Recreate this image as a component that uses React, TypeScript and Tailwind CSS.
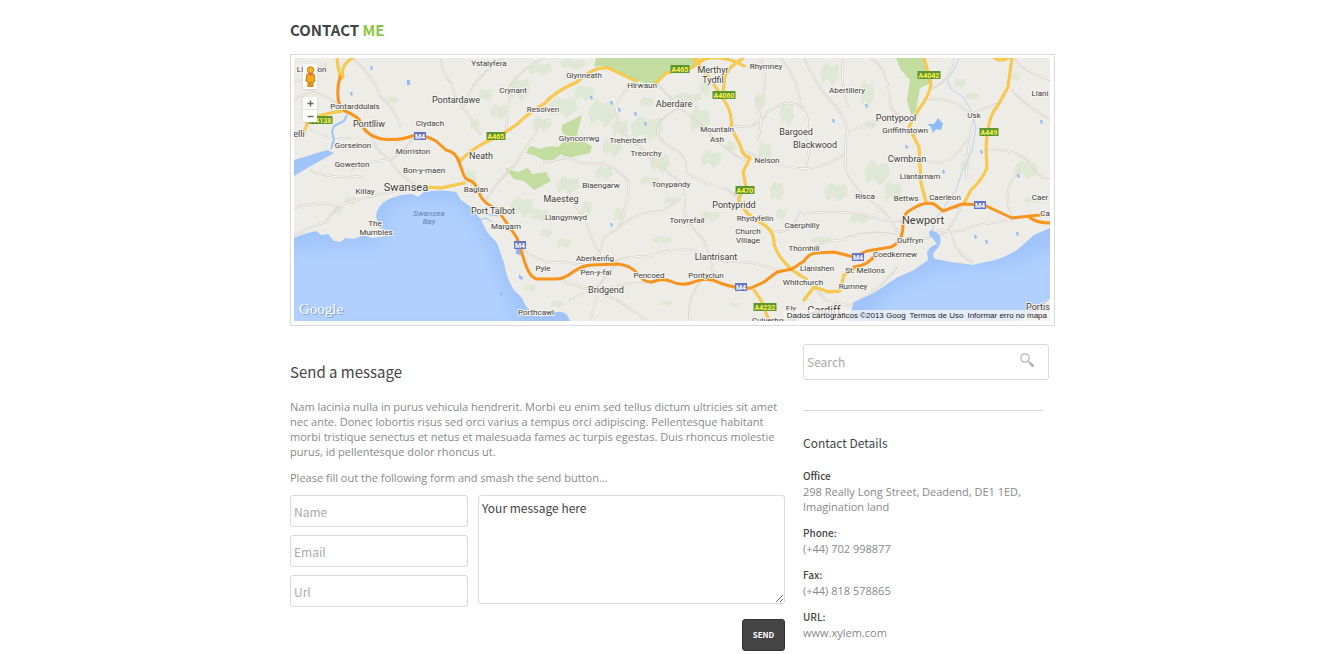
import { useState } from 'react'

type Label = [text: string, x: number, y: number]

const TOWNS: Label[] = [
  ['Ystalyfera', 489, 66], ['Glynneath', 584, 78], ['Crynant', 513, 93], ['Hirwaun', 642, 88],
  ['Resolven', 543, 112], ['Pontarddulais', 355, 109], ['Clydach', 430, 126],
  ['Gorseinon', 353, 148], ['Morriston', 413, 154], ['Gowerton', 352, 167], ['Bon-y-maen', 424, 173],
  ['Killay', 365, 194], ['Baglan', 476, 192], ['Margam', 506, 229], ['The', 375, 226],
  ['Mumbles', 376, 235], ['Llangynwyd', 566, 220], ['Blaengarw', 601, 188], ['Glyncorrwg', 579, 141],
  ['Treherbert', 628, 143], ['Treorchy', 646, 156], ['Rhymney', 766, 69], ['Mountain', 717, 132],
  ['Ash', 717, 142], ['Nelson', 767, 163], ['Abertillery', 847, 93], ['Griffithstown', 905, 133],
  ['Usk', 974, 118], ['Llantarnam', 920, 179], ['Risca', 865, 199], ['Bettws', 906, 201],
  ['Caerleon', 945, 200], ['Duffryn', 910, 243], ['Coedkernew', 895, 257], ['Thornhill', 804, 251],
  ['Llanishen', 817, 271], ['St. Mellons', 865, 273], ['Rumney', 853, 289], ['Whitchurch', 803, 285],
  ['Ely', 791, 311], ['Pontyclun', 706, 278], ['Church', 748, 234], ['Village', 748, 243],
  ['Rhydyfelin', 755, 221], ['Caerphilly', 802, 228], ['Tonypandy', 671, 187], ['Tonyrefail', 687, 223],
  ['Pencoed', 649, 278], ['Pen-y-fai', 596, 275], ['Aberkenfig', 595, 261], ['Pyle', 543, 271],
  ['Porthcawl', 536, 315], ['Llani', 1040, 96], ['Caer', 1040, 200], ['Ca', 1045, 216],
  ['Ll', 300, 72], ['ion', 321, 72], ['Culverhouse', 774, 323],
]

const BIG_TOWNS: Label[] = [
  ['Pontardawe', 456, 103], ['Pontlliw', 369, 127], ['elli', 299, 137], ['Maesteg', 561, 202],
  ['Aberdare', 674, 107], ['Merthyr', 713, 73], ['Tydfil', 713, 83], ['Bargoed', 796, 135],
  ['Blackwood', 815, 148], ['Pontypool', 896, 121], ['Cwmbran', 907, 162], ['Pontypridd', 734, 208],
  ['Llantrisant', 716, 260], ['Bridgend', 606, 293], ['Neath', 481, 159], ['Port Talbot', 493, 214],
  ['Portis', 1038, 310],
]

const CITIES: Label[] = [['Swansea', 406, 191], ['Newport', 923, 224], ['Cardiff', 824, 314]]

const SHIELDS: Label[] = [
  ['A4138', 321, 120], ['A465', 496, 136], ['A465', 680, 69], ['A4060', 724, 95], ['A470', 745, 190],
  ['A4042', 929, 75], ['A449', 989, 132], ['A4232', 765, 307],
]

const MOTORWAY_SHIELDS: Label[] = [
  ['M4', 420, 136], ['M4', 520, 245], ['M4', 741, 287], ['M4', 858, 257], ['M4', 980, 205],
]

const MOTORWAYS = [
  'M340 77 Q337 88 338 97 Q338 105 345 111 Q358 116 362 124 Q365 135 382 139 Q400 141 412 136 Q422 133 436 141 L446 150 Q456 152 459 162 L463 173 Q464 179 471 181 Q476 183 480 195 Q484 204 497 209 L506 222 L517 238 Q521 250 525 263 Q530 278 537 279 L556 279 Q564 279 573 272 Q583 265 592 265 L617 264 Q630 265 637 273 Q644 283 652 282 Q662 278 670 281 Q682 287 694 282 Q707 276 720 283 Q737 289 751 288 L764 282 L777 272 L792 269 L804 261 Q810 253 816 253 L834 252 L854 257 L867 251 L891 247 Q903 242 903 225 Q902 214 912 209 Q924 201 934 204 L943 211 L962 204 L984 205 L1012 218 L1050 214',
  'M1029 217 Q1036 223 1050 223',
  'M876 252 Q871 265 854 267',
]

const A_ROADS = [
  'M337 58 Q338 70 341 79 M352 58 Q340 66 343 77',
  'M303 134 L309 120 Q320 114 342 111',
  'M459 162 Q468 152 484 143 Q510 132 524 118 Q536 108 544 104 Q554 92 577 82 Q594 66 608 68 L636 81 M656 83 L666 73 L691 68 L706 58',
  'M693 58 L711 80 L724 100 Q733 113 731 127 L741 147 Q742 156 750 158 L743 172 L746 187 Q738 196 739 202 L747 213 L761 223 Q774 230 774 243 Q776 255 792 270 L806 279',
  'M743 58 L731 67 L725 76 L723 92 M695 62 Q720 52 744 66',
  'M754 290 L762 302 L769 321',
  'M924 58 L931 83 Q930 95 919 109 L909 127 L919 147 L921 183 L926 202',
  'M1012 58 L1008 87 L997 107 Q987 117 986 150 L987 168 Q982 180 971 190 L964 203',
  'M427 187 L441 188 L464 183',
  'M804 300 L814 287 L829 292 L840 291 L844 275 L857 267',
  'M993 57 Q1001 63 1010 57',
]

const MINOR_ROADS = [
  'M441 58 Q442 75 452 84 Q454 100 468 114 L480 134 M503 58 Q478 76 470 92 L462 108',
  'M294 100 Q310 90 322 95 Q334 100 340 108 M294 82 Q312 76 326 64',
  'M544 58 Q516 72 510 90 Q508 108 506 130',
  'M372 137 Q375 150 388 158 Q398 175 418 187 M352 170 Q372 160 388 160 Q402 156 413 138',
  'M294 237 Q310 226 326 222 Q335 208 346 203 Q370 196 400 190 M294 208 Q320 200 338 206 L346 203',
  'M636 81 Q626 88 620 98 Q614 106 618 120 Q622 135 640 147 Q650 160 662 168 L678 180',
  'M656 83 Q667 94 680 108 Q698 122 712 136 Q727 150 744 160',
  'M680 108 Q655 120 657 134 Q663 144 676 150 Q688 158 686 172',
  'M544 162 Q558 160 568 157 Q580 165 602 163 Q620 170 629 182 Q628 206 618 228 Q612 233 604 237 L597 264',
  'M563 180 Q572 206 584 216 Q590 235 598 250 M617 230 Q634 212 662 211 Q676 202 680 199',
  'M678 180 Q688 194 684 212 Q688 224 702 238 Q710 252 714 277',
  'M612 264 Q622 256 650 256 Q670 248 694 250 Q712 264 748 262 L780 270',
  'M559 279 Q578 288 594 290 Q620 300 635 312 L648 321 M617 264 Q600 280 598 292 L590 321',
  'M570 300 Q590 288 610 288 Q630 282 650 283 M690 321 Q686 300 700 283',
  'M686 172 Q704 184 724 188 Q736 194 740 202 M760 222 Q780 240 794 224 L800 212',
  'M780 58 Q796 75 800 102 Q812 118 806 136 Q812 154 804 170',
  'M804 58 Q816 84 828 98 Q844 112 848 132 Q844 145 846 170 Q854 190 878 206 Q896 222 900 240',
  'M843 58 Q840 84 848 106 M870 58 Q890 70 890 106 L904 122 M846 134 Q870 120 896 118',
  'M931 88 Q948 84 954 58 M926 99 Q955 96 974 118 M974 118 Q968 140 966 178',
  'M974 113 L996 104 M1012 90 Q1024 105 1050 120 M1015 58 Q1020 70 1050 80',
  'M903 220 Q890 224 862 214 Q830 210 804 214 M962 206 Q948 236 936 236 Q914 242 903 240',
  'M938 230 Q962 234 972 226 L1012 220 M952 232 Q955 254 972 262',
  'M732 125 Q755 132 768 112 Q790 95 804 110 M741 150 Q790 172 812 168 Q836 162 846 152',
  'M810 250 Q822 240 842 240 Q866 228 900 236 M806 279 L826 300 L850 306',
  'M544 121 Q530 140 516 164 Q498 180 486 200 M523 250 Q530 256 548 262 Q570 262 590 266',
  'M986 150 Q1020 148 1032 166 Q1040 180 1050 178 M921 160 Q946 168 960 150 L968 140',
  'M352 58 Q372 74 380 96 Q396 110 400 126 M312 130 Q330 140 350 138 M310 170 Q330 180 362 176',
  'M760 58 Q772 88 756 104 Q764 118 758 140 M1020 170 Q1000 190 1012 216 M850 306 Q880 290 896 268',
]

const PARKS = [
  'M596 58 L594 67 Q606 64 616 71 L637 81 Q650 85 657 82 L666 72 L692 67 L699 58Z',
  'M896 58 L901 70 L910 80 L907 100 L911 115 Q917 113 917 104 L920 88 L931 83 L924 58Z',
  'M582 115 L562 125 Q560 133 568 137 L558 147 Q548 145 541 149 L530 146 L526 153 L536 156 Q548 164 556 158 L561 154 L568 158 L590 153 L592 146 L576 138Z',
  'M505 168 L518 172 L528 168 L532 174 L546 172 L551 181 L542 186 L534 190 L524 181 L514 179Z',
]

// x, y, width, height of the upland tints
const HILLS: [number, number, number, number][] = [
  [508, 76, 22, 26], [478, 88, 15, 14], [548, 96, 30, 22], [588, 98, 28, 30], [630, 115, 34, 26],
  [602, 136, 20, 22], [595, 165, 18, 16], [556, 176, 24, 18], [650, 152, 20, 22], [690, 105, 20, 30],
  [700, 150, 22, 18], [674, 92, 28, 12], [726, 140, 10, 12], [758, 140, 14, 24], [780, 100, 14, 28],
  [700, 78, 10, 20], [754, 92, 12, 18], [820, 62, 20, 24], [860, 80, 14, 28], [864, 160, 26, 26],
  [824, 182, 24, 20], [850, 212, 20, 12], [884, 180, 18, 22], [864, 120, 12, 10], [954, 78, 12, 10],
  [1014, 160, 24, 20], [1024, 196, 20, 8], [1012, 72, 8, 10], [960, 160, 10, 14], [966, 92, 14, 9],
  [344, 196, 12, 10], [334, 204, 8, 12], [388, 96, 10, 8], [464, 168, 12, 20], [510, 196, 24, 22],
  [530, 208, 20, 14], [524, 284, 12, 8], [556, 238, 16, 10], [614, 206, 12, 18], [640, 176, 20, 10],
  [664, 196, 12, 10], [700, 210, 20, 12], [770, 180, 14, 22], [776, 208, 10, 12], [652, 236, 20, 8],
  [810, 236, 22, 8], [790, 244, 12, 6], [550, 300, 14, 8], [660, 300, 12, 6], [730, 302, 10, 6],
  [528, 62, 24, 14], [560, 58, 26, 12], [574, 84, 20, 18], [612, 118, 16, 20], [640, 96, 14, 12],
  [532, 116, 20, 16], [490, 104, 18, 16], [470, 118, 10, 14], [540, 228, 12, 10], [582, 200, 10, 16],
]

const POND_DOTS: [number, number][] = [
  [370, 66], [350, 92], [610, 101], [634, 112], [644, 122], [590, 96], [832, 119],
  [955, 205], [974, 235], [985, 240], [1016, 232], [1040, 120], [865, 104], [520, 276], [500, 292],
  [980, 150], [905, 145], [618, 108], [470, 100], [610, 223], [942, 170], [1017, 174],
]

const FIELD =
  'w-full rounded-[3px] border border-[#d9d9d9] bg-white px-[3px] text-[12px] text-[#444] outline-none'

const FONT_HEAD = "font-['Noto_Sans_CJK_SC','Open_Sans',sans-serif]"

function MapLabels({ items, size }: { items: Label[]; size: number }) {
  return (
    <g fontSize={size} textAnchor="middle" fill="#3c3c3c" stroke="#f6f4ef" strokeWidth="2" strokeLinejoin="round" paintOrder="stroke">
      {items.map(([text, x, y]) => (
        <text key={text + x} x={x} y={y}>
          {text}
        </text>
      ))}
    </g>
  )
}

function MapDrawing({ zoom }: { zoom: number }) {
  return (
    <svg
      viewBox="294 58 756 263"
      preserveAspectRatio="xMidYMid slice"
      className="block h-[263px] w-full font-[Roboto,sans-serif]"
      role="img"
      aria-label="South Wales map"
    >
      <defs>
        <filter id="soft" x="-30%" y="-30%" width="160%" height="160%">
          <feGaussianBlur stdDeviation="8" />
        </filter>
        <clipPath id="sea">
          <path d="M294 238 L304 234 L316 231 L321 235 L328 234 L334 241 L341 242 L345 238 L354 239 L364 235 L372 238 L382 237 L387 232 L379 227 L376 216 Q377 206 387 200 Q399 194 412 194 L418 197 L424 192 Q440 189 456 192 L461 200 L471 207 L481 220 L487 232 L497 243 L504 263 Q507 280 514 290 L522 298 L527 308 L541 317 L550 312 L561 312 Q568 313 570 321 L294 321Z M1050 228 L1034 235 L1017 250 Q1003 259 986 262 L973 265 L951 262 L935 259 Q931 255 936 250 Q944 242 938 233 L931 230 Q926 233 933 239 L937 244 Q930 246 927 252 L928 260 L914 270 L898 277 L890 282 L874 293 L854 302 L848 321 L1018 321 L1030 313 L1040 309 L1050 298Z M294 160 L304 157 L327 150 L334 153 L318 162 L304 170 L294 176Z" />
        </clipPath>
      </defs>
      <g transform={`translate(672 189) scale(${1 + zoom * 0.25}) translate(-672 -189)`}>
        <rect x="294" y="58" width="756" height="263" fill="#eeece6" />
        <g fill="#dfe8d5">
          {HILLS.map(([x, y, w, h]) => (
            <path
              key={`${x}-${y}`}
              d={`M${x} ${y + h * 0.4} L${x + w * 0.3} ${y} L${x + w * 0.55} ${y + h * 0.2} L${x + w * 0.9} ${y + h * 0.1} L${x + w} ${y + h * 0.6} L${x + w * 0.6} ${y + h} L${x + w * 0.4} ${y + h * 0.7} L${x + w * 0.1} ${y + h * 0.9}Z`}
            />
          ))}
        </g>
        <g fill="#c3dda0">
          {PARKS.map((d) => (
            <path key={d} d={d} />
          ))}
        </g>
        <g fill="none" strokeLinejoin="round" strokeLinecap="round">
          {MINOR_ROADS.map((d) => (
            <path key={d} d={d} stroke="#d0cac1" strokeWidth="2" />
          ))}
          {MINOR_ROADS.map((d) => (
            <path key={d} d={d} stroke="#fbfaf7" strokeWidth="1" />
          ))}
        </g>
        <g clipPath="url(#sea)">
          <rect x="294" y="58" width="756" height="263" fill="#a0c4fa" />
          <g fill="#b1d0ff" filter="url(#soft)">
            <path d="M284 250 L330 248 L380 246 L386 216 L400 202 L454 200 L478 228 L498 272 L508 300 L524 330 L284 330Z" />
            <path d="M1060 246 L1010 266 L940 270 L890 292 L862 330 L1060 330Z" />
          </g>
        </g>
        <g fill="#8fbaf9">
          <path d="M938 118 L943 124 L941 130 L936 129 L933 133 L931 127 L927 124 L934 124Z" />
          <path d="M516 249 L521 249 L523 256 L516 254Z M519 274 L522 278 L519 279Z M407 80 h3 v5 h-3Z" />
          {POND_DOTS.map(([x, y]) => (
            <path key={`${x}-${y}`} d={`M${x} ${y} l2 0 l1 3 l-2 1Z`} />
          ))}
        </g>
        <g fill="none" stroke="#9cc3f8" strokeLinejoin="round">
          <path d="M347 115 L344 121 L334 126 L332 131 L334 139 L331 149" strokeWidth="2" />
          <path d="M959 58 L954 70 L947 80 L952 90 L962 96 L970 108 L976 128 L972 150 L962 172 L956 190 L946 204 L934 222 L932 232" stroke="#b9d2f3" />
          <path d="M478 220 L486 218 L492 222 M484 214 L498 216" />
        </g>
        <g fill="none" strokeLinejoin="round" strokeLinecap="round">
          {A_ROADS.map((d) => (
            <path key={d} d={d} stroke="#eebf50" strokeWidth="3" />
          ))}
          {A_ROADS.map((d) => (
            <path key={d} d={d} stroke="#fccb48" strokeWidth="2" />
          ))}
          {MOTORWAYS.map((d) => (
            <path key={d} d={d} stroke="#f7941d" strokeWidth="3" />
          ))}
        </g>
        {SHIELDS.map(([text, x, y]) => {
          const w = text.length === 5 ? 23 : 19
          return (
            <g key={text + x}>
              <rect x={x - w / 2} y={y - 4} width={w} height="8" fill="#5d9732" />
              <text x={x} y={y + 3} textAnchor="middle" fontSize="7" fontWeight="700" fill="#fff04d">
                {text}
              </text>
            </g>
          )
        })}
        {MOTORWAY_SHIELDS.map(([text, x, y]) => (
          <g key={text + x}>
            <rect x={x - 6} y={y - 4} width="12" height="8" fill="#6674c4" />
            <text x={x} y={y + 3} textAnchor="middle" fontSize="7" fontWeight="700" fill="#fff">
              {text}
            </text>
          </g>
        ))}
        <MapLabels items={TOWNS} size={8} />
        <MapLabels items={BIG_TOWNS} size={9} />
        <MapLabels items={CITIES} size={11} />
        <g fontSize="8" fontStyle="italic" textAnchor="middle" fill="#5f80b0">
          <text x="429" y="216">Swansea</text>
          <text x="429" y="224">Bay</text>
        </g>
      </g>
      <g className="font-['Liberation_Serif',serif]" fontSize="15">
        <text x="300" y="315" fill="#7f98bd" aria-hidden="true">Google</text>
        <text x="299" y="314" fill="#fff">Google</text>
      </g>
    </svg>
  )
}

function Pegman() {
  return (
    <svg viewBox="0 0 11 21" className="h-[21px] w-[11px]" aria-hidden="true">
      <path d="M2 8 h7 l1 7 -2 1 v5 h-2 v-5 h-1 v5 h-2 v-5 l-2 -1Z" fill="#f5a91c" stroke="#c9770c" strokeWidth="1" />
      <circle cx="5.5" cy="4" r="3.2" fill="#f9b52c" stroke="#c9770c" strokeWidth="1" />
      <path d="M3 7 L8 7 L5.5 10Z" fill="#ee6352" />
    </svg>
  )
}

function MapPanel() {
  const [zoom, setZoom] = useState(0)
  const control = 'flex items-center justify-center bg-white text-[#666]'

  return (
    <div className="border border-[#d9d9d9] pt-[3px] pr-1 pb-1 pl-[3px]">
      <div className="relative overflow-hidden">
        <MapDrawing zoom={zoom} />
        <div className="absolute top-[6px] left-[9px] flex w-[14px] flex-col">
          <button type="button" aria-label="Street View" className={`${control} mb-2 h-[25px] rounded-[1px] shadow`}>
            <Pegman />
          </button>
          <div className="shadow">
            <button type="button" aria-label="Zoom in" onClick={() => setZoom((z) => Math.min(z + 1, 4))} className={`${control} h-[13px] w-full border-b border-[#ddd]`}>
              <svg viewBox="0 0 7 7" className="size-[7px]"><path d="M0.5 3.5h6M3.5 0.5v6" stroke="#666" strokeWidth="1.4" /></svg>
            </button>
            <button type="button" aria-label="Zoom out" onClick={() => setZoom((z) => Math.max(z - 1, 0))} className={`${control} h-3 w-full`}>
              <svg viewBox="0 0 7 7" className="size-[7px]"><path d="M0.5 3.5h6" stroke="#666" strokeWidth="1.4" /></svg>
            </button>
          </div>
        </div>
        <div className="absolute right-0 bottom-0 flex gap-1 bg-[#f5f5f5]/75 px-[3px] font-['Liberation_Sans',sans-serif] text-[8px] leading-[11px] text-[#222]">
          <span>Dados cartográficos ©2013 Goog</span>
          <a href="#terms">Termos de Uso</a>
          <a href="#report">Informar erro no mapa</a>
        </div>
      </div>
    </div>
  )
}

const DETAILS = [
  { title: 'Office', text: '298 Really Long Street, Deadend, DE1 1ED, Imagination land' },
  { title: 'Phone:', text: '(+44) 702 998877' },
  { title: 'Fax:', text: '(+44) 818 578865' },
  { title: 'URL:', text: 'www.xylem.com', href: '#url' },
]

function Sidebar() {
  return (
    <aside className="w-[246px] shrink-0">
      <div className="flex h-9 items-center rounded-[3px] border border-[#d9d9d9] pr-[13px] pl-[3px]">
        <input
          type="search"
          aria-label="Search"
          placeholder="Search"
          className={`${FONT_HEAD} min-w-0 flex-1 text-[12px] text-[#444] outline-none placeholder:text-[#aaa]`}
        />
        <button type="button" aria-label="Submit search" className="pb-[3px]">
          <svg viewBox="0 0 15 15" className="size-[15px]" fill="none" stroke="#b5b5b5">
            <circle cx="5" cy="5" r="4.2" strokeWidth="1.2" />
            <path d="M8 8l1.5 1.5" strokeWidth="1.2" />
            <path d="M9.5 9.5l4 4" strokeWidth="2.6" />
          </svg>
        </button>
      </div>
      <hr className="mt-[30px] mr-[6px] border-[#d9d9d9]" />
      <h3 className={`${FONT_HEAD} mt-[22px] text-[12px] leading-5 text-[#444]`}>Contact Details</h3>
      <dl className="mt-[15px] text-[11px] text-[#888]">
        {DETAILS.map(({ title, text, href }) => (
          <div key={title} className="mb-[11px]">
            <dt className={`${FONT_HEAD} text-[10px] leading-4 font-medium text-[#444]`}>{title}</dt>
            <dd className="leading-[15px]">{href ? <a href={href}>{text}</a> : text}</dd>
          </div>
        ))}
      </dl>
    </aside>
  )
}

function MessageForm() {
  return (
    <form className={FONT_HEAD} onSubmit={(e) => e.preventDefault()}>
      <div className="flex gap-[10px]">
        <div className="flex w-[178px] flex-col gap-2">
          {['Name', 'Email', 'Url'].map((name) => (
            <input
              key={name}
              type="text"
              name={name.toLowerCase()}
              aria-label={name}
              placeholder={name}
              className={`${FIELD} h-8 placeholder:text-[#aaa]`}
            />
          ))}
        </div>
        <textarea
          aria-label="Message"
          defaultValue="Your message here"
          className={`${FIELD} h-[109px] min-w-0 flex-1 pt-[2px] leading-5`}
        />
      </div>
      <div className="mt-3 flex justify-end">
        <button
          type="submit"
          className="h-8 w-[43px] rounded-[3px] border border-[#333] bg-[#444] text-[8px] font-bold text-white"
        >
          SEND
        </button>
      </div>
    </form>
  )
}

export default function App() {
  return (
    <main className="mx-auto max-w-[959px] bg-white pr-[84px] pl-[110px] font-['Open_Sans',sans-serif] text-[#888]">
      <h1 className={`${FONT_HEAD} pt-[18px] pb-3 text-[15px] leading-6 font-bold text-[#444]`}>
        CONTACT <span className="text-[#8cc63f]">ME</span>
      </h1>
      <MapPanel />
      <div className="flex gap-[18px] pt-[18px] pr-[6px]">
        <section className="min-w-0 flex-1">
          <h2 className={`${FONT_HEAD} mt-4 text-[15px] leading-6 text-[#444]`}>Send a message</h2>
          <p className="mt-[15px] text-[11px] leading-[15px]">
            Nam lacinia nulla in purus vehicula hendrerit. Morbi eu enim sed tellus dictum ultricies sit amet nec
            ante. Donec lobortis risus sed orci varius a tempus orci adipiscing. Pellentesque habitant morbi
            tristique senectus et netus et malesuada fames ac turpis egestas. Duis rhoncus molestie purus, id
            pellentesque dolor rhoncus ut.
          </p>
          <p className="mt-[11px] mb-[10px] text-[11px] leading-[15px]">
            Please fill out the following form and smash the send button...
          </p>
          <MessageForm />
        </section>
        <Sidebar />
      </div>
    </main>
  )
}
